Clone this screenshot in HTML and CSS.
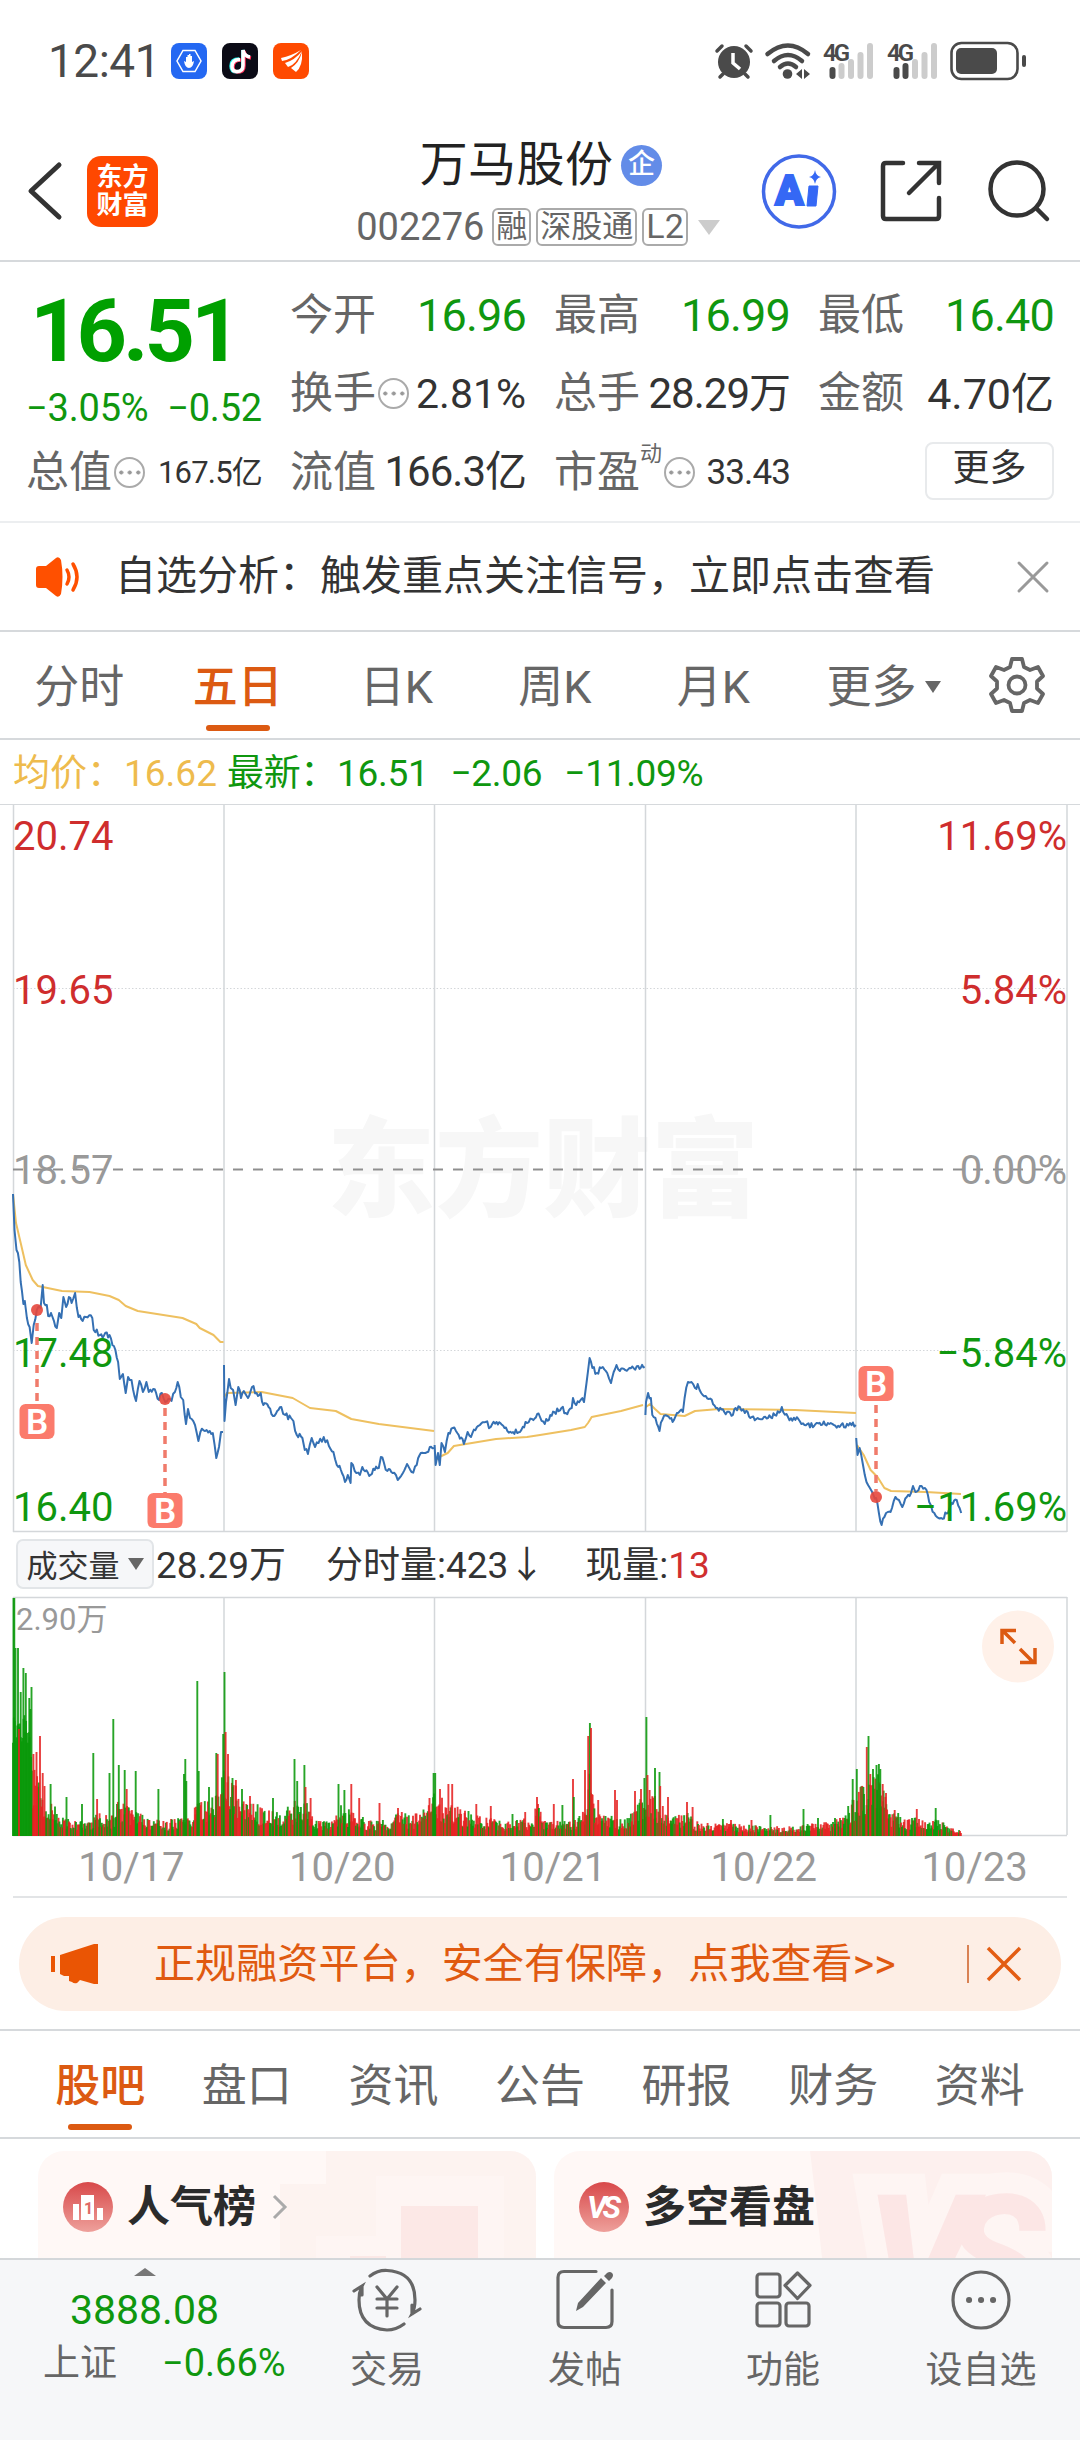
FILE: index.html
```html
<!DOCTYPE html>
<html lang="zh-CN">

<head>
    <meta charset="UTF-8">
    <meta name="viewport" content="width=device-width, initial-scale=1.0">
    <title>万马股份 002276</title>
    <link rel="stylesheet" href="styles.css">
</head>

<body>
    <!-- Status bar -->
    <div class="status-bar">
        <div class="status-left">
            <span class="clock">12:41</span>
            <svg class="app-icon" width="36" height="36" viewBox="0 0 36 36">
                <rect width="36" height="36" rx="8" fill="#2468f2" />
                <path d="M12 7.500h12l6 10.500-6 10.500H12L6 18z" fill="none" stroke="#fff" stroke-width="1.500" />
                <path d="M13 18l2 1v-5h1.500v-2H18v-1h1.500v2H21v6l2-1q-1 7-5 7t-5-7z" fill="#fff" />
            </svg>
            <svg class="app-icon" width="36" height="36" viewBox="0 0 36 36">
                <rect width="36" height="36" rx="8" fill="#0b0b16" />
                <path d="M17 16q-8 0-8 7 0 6 6 6 6 0 6-6V7q1 6 7 7" fill="none" stroke="#25f4ee" stroke-width="3.500" />
                <path d="M19 17q-8 0-8 7 0 5 5 5 6 0 6-6V8q1 6 7 7" fill="none" stroke="#fe2c55" stroke-width="3.500" />
                <path d="M18 16.500q-8 0-8 7 0 5 5 5 6 0 6-6V7q1 6 7 7" fill="none" stroke="#fff" stroke-width="3.500" />
            </svg>
            <svg class="app-icon" width="36" height="36" viewBox="0 0 36 36">
                <rect width="36" height="36" rx="8" fill="#ff4a00" />
                <path d="M8 15Q18 13 28 7 18 17 9 18zM12 20q10-3 17-12-6 14-14 16zM18 25q8-5 11-16 1 14-6 20z" fill="#fff" />
            </svg>
        </div>
        <div class="status-right">
            <svg width="38" height="38" viewBox="0 0 38 38">
                <circle cx="19" cy="20" r="16" fill="#4a4a4a" />
                <path d="M18 11v10l7 6" fill="none" stroke="#fff" stroke-width="3.500" />
                <path d="M2 9l5-5M36 9l-5-5M8 32l-3 3M30 32l3 3" stroke="#4a4a4a" stroke-width="3.500" stroke-linecap="round" />
            </svg>
            <svg width="46" height="38" viewBox="0 0 46 38">
                <g fill="none" stroke="#4a4a4a" stroke-width="4.500" stroke-linecap="round">
                    <path d="M2.500 12Q23-5 43 12" />
                    <path d="M9 19Q23 7 37 19" />
                    <path d="M15 25Q23 18 31 25" />
                </g>
                <circle cx="22.500" cy="32" r="4.800" fill="#4a4a4a" />
                <path d="M31 32l6-5v10zM45 32l-6-5v10z" fill="#4a4a4a" />
            </svg>
            <svg width="54" height="38" viewBox="0 0 54 38">
                <text class="signal-text" x="0" y="19">4G</text>
                <path d="M9.500 28v6" class="bar-on" />
                <path d="M18.500 24v10M28 20v14M37.500 13v21M47 4v30" class="bar-off" />
            </svg>
            <svg width="54" height="38" viewBox="0 0 54 38">
                <text class="signal-text" x="0" y="19">4G</text>
                <path d="M9.500 28v6M18.500 24v10" class="bar-on" />
                <path d="M28 20v14M37.500 13v21M47 4v30" class="bar-off" />
            </svg>
            <svg width="77" height="40" viewBox="0 0 77 40">
                <rect x="1.500" y="2" width="66" height="36" rx="10" fill="none" stroke="#4a4a4a" stroke-width="2.600" />
                <rect x="6" y="7" width="41" height="26" rx="5" fill="#4a4a4a" />
                <path d="M74 16v8" stroke="#4a4a4a" stroke-width="4" stroke-linecap="round" />
            </svg>
        </div>
    </div>

    <!-- Stock title -->
    <header class="header">
        <div class="header-left">
            <svg width="34" height="58" viewBox="0 0 34 58">
                <path d="M31 3L3 29l28 26" fill="none" stroke="#333" stroke-width="5" stroke-linecap="round" stroke-linejoin="round" />
            </svg>
            <div class="logo"><span>东方</span><span>财富</span></div>
        </div>
        <div class="header-title">
            <div class="stock-name">万马股份<span class="badge">企</span></div>
            <div class="stock-code">002276<span class="tag">融</span><span class="tag">深股通</span><span class="tag">L2</span><i class="caret"></i></div>
        </div>
        <div class="header-right">
            <svg width="75" height="75" viewBox="0 0 75 75">
                <circle cx="37" cy="37.500" r="35.500" fill="none" stroke="#4169e8" stroke-width="3.500" />
                <text x="13" y="51" class="ai-text">A</text>
                <path d="M47 32h9l-2 20h-9z" fill="#3568f5" stroke="#3568f5" stroke-linejoin="round" />
                <path d="M53 16q1 6 6 7-5 1-6 7-1-6-6-7 5-1 6-7z" fill="#3568f5" />
            </svg>
            <svg width="62" height="62" viewBox="0 0 62 62">
                <path d="M23 3H6q-3 0-3 3v50q0 3 3 3h50q3 0 3-3V38" fill="none" stroke="#333" stroke-width="4.500" stroke-linecap="round" />
                <path d="M39 3h20v20M58 4L29 33" fill="none" stroke="#333" stroke-width="4.500" stroke-linecap="round" />
            </svg>
            <svg width="62" height="64" viewBox="0 0 62 64">
                <circle cx="29" cy="30" r="26.500" fill="none" stroke="#333" stroke-width="4.500" />
                <path d="M48 49l11 11" stroke="#333" stroke-width="4.500" stroke-linecap="round" />
            </svg>
        </div>
    </header>

    <!-- Quote figures -->
    <section class="quote">
        <div class="quote-main">
            <div class="price">16.51</div>
            <div class="change"><span>−3.05%</span><span>−0.52</span></div>
        </div>
        <div class="cell"><label>今开</label><b class="down">16.96</b></div>
        <div class="cell"><label>最高</label><b class="down">16.99</b></div>
        <div class="cell"><label>最低</label><b class="down">16.40</b></div>
        <div class="cell"><label>换手</label><i class="info"></i><b class="percent">2.81%</b></div>
        <div class="cell"><label>总手</label><b class="tight">28.29万</b></div>
        <div class="cell"><label>金额</label><b class="amount">4.70亿</b></div>
        <div class="cell"><label>总值</label><i class="info"></i><b class="small">167.5亿</b></div>
        <div class="cell"><label>流值</label><b class="tight">166.3亿</b></div>
        <div class="cell"><label>市盈<sup>动</sup></label><i class="info"></i><b class="medium">33.43</b></div>
        <div class="cell"><button class="more-button">更多</button></div>
    </section>

    <section class="notice">
        <svg width="46" height="40" viewBox="0 0 46 40">
            <path d="M1 12q0-3 3-3h7L21 1q3-2 5 2 3 17 0 34-2 4-5 2l-10-8H4q-3 0-3-3z" fill="#ff5000" />
            <path d="M32 13q4 7 0 14M38 7q8 13 0 26" fill="none" stroke="#ff5000" stroke-width="3.500" stroke-linecap="round" />
        </svg>
        <p>自选分析：触发重点关注信号，立即点击查看</p>
        <svg width="32" height="32" viewBox="0 0 32 32">
            <path d="M2 2l28 28M30 2L2 30" stroke="#999" stroke-width="3" stroke-linecap="round" />
        </svg>
    </section>

    <nav class="period-tabs">
        <a>分时</a>
        <a class="active">五日</a>
        <a>日K</a>
        <a>周K</a>
        <a>月K</a>
        <a class="more">更多<i class="triangle"></i></a>
        <svg width="56" height="56" viewBox="0 0 56 56">
            <path d="M23 2h10l2 8 6 3 8-3 5 9-6 5.500v7l6 5.500-5 9-8-3-6 3-2 8H23l-2-8-6-3-8 3-5-9 6-5.500v-7L2 19l5-9 8 3 6-3z" fill="none" stroke="#666" stroke-width="3.800" stroke-linejoin="round" />
            <circle cx="28" cy="28" r="8.500" fill="none" stroke="#666" stroke-width="3.800" />
        </svg>
    </nav>

    <div class="legend">
        <span class="average">均价：16.62</span>
        <span class="latest">最新：16.51</span>
        <span class="latest">−2.06</span>
        <span class="latest">−11.09%</span>
    </div>

    <!-- Five day price chart -->
    <svg class="price-chart" width="1080" height="727" viewBox="0 0 1080 727">
        <text class="watermark" x="543" y="403">东方财富</text>
        <g class="grid">
            <path d="M13.500 0v727M224 0v727M434.500 0v727M645.500 0v727M856 0v727M1067 0v727" />
            <path d="M13 726.500h1054" />
            <path class="dotted" d="M13 183.500h1054M13 545.500h1054" />
        </g>
        <path class="middle" d="M13 364.500h1054" />
        <g id="averageLines" class="average-line"></g>
        <g id="priceLines" class="price-line"></g>
        <g class="axis">
            <text x="13" y="45" class="up">20.74</text>
            <text x="13" y="199" class="up">19.65</text>
            <text x="13" y="379" class="flat">18.57</text>
            <text x="13" y="562" class="down">17.48</text>
            <text x="13" y="716" class="down">16.40</text>
            <text x="1067" y="45" class="up end">11.69%</text>
            <text x="1067" y="199" class="up end">5.84%</text>
            <text x="1067" y="379" class="flat end">0.00%</text>
            <text x="1067" y="562" class="down end">−5.84%</text>
            <text x="1067" y="716" class="down end">−11.69%</text>
        </g>
        <g class="buy-marks">
            <path d="M37 518v81M165 603v85M876 600v86" />
            <circle cx="37" cy="505" r="6" />
            <circle cx="165" cy="594" r="6" />
            <circle cx="876" cy="692" r="6" />
            <rect x="19.500" y="599" width="35" height="35" rx="6" />
            <rect x="147.500" y="688" width="35" height="35" rx="6" />
            <rect x="858.500" y="561" width="35" height="35" rx="6" />
            <text x="37" y="629">B</text>
            <text x="165" y="718">B</text>
            <text x="876" y="591">B</text>
        </g>
    </svg>

    <div class="volume-info">
        <button class="volume-button">成交量<i class="triangle"></i></button>
        <span>28.29万</span>
        <span>分时量:423↓</span>
        <span>现量:<em>13</em></span>
    </div>

    <!-- Volume chart -->
    <svg class="volume-chart" width="1080" height="240" viewBox="0 0 1080 240">
        <g class="grid">
            <path d="M13 .500h1054M13 238.500h1054" />
            <path d="M13.500 0v238M224 0v238M434.500 0v238M645.500 0v238M856 0v238M1067 0v238" />
        </g>
        <text x="16" y="33" class="volume-max">2.90万</text>
        <g id="volumeBars" class="volume-bars"></g>
        <circle cx="1018" cy="49.500" r="36" fill="#fff1e9" />
        <path d="M1002 47V33.500h14M1003 34l12 12M1020 52l14 14M1035 51v14.500h-15" class="expand" />
    </svg>
    <div class="dates">
        <span>10/17</span>
        <span>10/20</span>
        <span>10/21</span>
        <span>10/22</span>
        <span>10/23</span>
    </div>

    <section class="promo">
        <svg width="50" height="42" viewBox="0 0 50 42">
            <path d="M10 12L44 1h4v40h-4l-14-4-3 3q-3 1-5-1l-3-1v-5h-5l-4-2zM1 13h4v16H1z" fill="#ea5504" />
        </svg>
        <p>正规融资平台，安全有保障，点我查看&gt;&gt;</p>
        <i class="divider"></i>
        <svg width="36" height="36" viewBox="0 0 36 36">
            <path d="M2 2l32 32M34 2L2 34" stroke="#e35d13" stroke-width="3.500" />
        </svg>
    </section>

    <nav class="content-tabs">
        <a class="active">股吧</a>
        <a>盘口</a>
        <a>资讯</a>
        <a>公告</a>
        <a>研报</a>
        <a>财务</a>
        <a>资料</a>
    </nav>

    <section class="cards">
        <div class="card">
            <svg class="card-art" width="210" height="107" viewBox="0 0 210 107">
                <path d="M0 0h210v107H-46V33H0z" fill="#fdf1ef" opacity=".8" />
                <path d="M-10 107V85h60V25h128v82z" fill="#fef5f3" />
                <path d="M75 107V55h77v52z" fill="#fce8e6" />
                <path d="M24 105h36v2H24z" fill="#fce8e6" />
            </svg>
            <svg width="50" height="50" viewBox="0 0 50 50">
                <circle cx="25" cy="25" r="25" fill="url(#redFade)" />
                <path d="M10 22h6v16h-6zM18 13h13v25H18zM34 26h6v12h-6z" fill="#fff" />
                <text x="21" y="32" class="rank-text">1</text>
            </svg>
            <h3>人气榜</h3>
            <svg width="16" height="26" viewBox="0 0 16 26">
                <path d="M2 2l11 11L2 24" fill="none" stroke="#aaa" stroke-width="3" />
            </svg>
        </div>
        <div class="card">
            <svg class="card-art" width="242" height="107" viewBox="0 0 242 107">
                <path d="M0 0h242v107H12Q6 50 0 0z" fill="#fdf0ee" />
                <text x="56" y="165" class="vs-art">VS</text>
            </svg>
            <svg width="50" height="50" viewBox="0 0 50 50">
                <defs>
                    <linearGradient id="redFade" x2="0" y2="1">
                        <stop offset="0" stop-color="#d8494a" />
                        <stop offset="1" stop-color="#eea09b" />
                    </linearGradient>
                </defs>
                <circle cx="25" cy="25" r="25" fill="url(#redFade)" />
                <text x="23" y="36" class="vs-text">VS</text>
            </svg>
            <h3>多空看盘</h3>
        </div>
    </section>

    <footer class="bottom-bar">
        <div class="index">
            <i class="up-triangle"></i>
            <strong>3888.08</strong>
            <div><span>上证</span><b>−0.66%</b></div>
        </div>
        <a>
            <svg width="68" height="64" viewBox="0 0 68 64">
                <g fill="none" stroke="#666" stroke-width="3.200" stroke-linecap="round">
                    <path d="M17 8Q25 2 34 2.500 62 4 62 32q0 8-3 14l8-5M59 46V37" />
                    <path d="M51 56q-8 6-17 6Q6 60 6 32q0-8 3-14l-8 5M9 18v9" />
                    <path d="M24 19l10 12 10-12M34 31v17M24 31h20M24 40h20" />
                </g>
            </svg>
            交易
        </a>
        <a>
            <svg width="60" height="64" viewBox="0 0 60 64">
                <path d="M41 3.500H9q-6 0-6 6v44q0 6 6 6h42q6 0 6-6V22" fill="none" stroke="#666" stroke-width="3.200" stroke-linecap="round" />
                <path d="M46 10l5 5-23 24-7 4 2-8zM49 8l3-3q3-2 5 0t0 5l-3 3z" fill="#666" />
            </svg>
            发帖
        </a>
        <a>
            <svg width="60" height="64" viewBox="0 0 60 64">
                <g fill="none" stroke="#666" stroke-width="3.200">
                    <rect x="4" y="6" width="23" height="23" rx="3" />
                    <rect x="4" y="35" width="23" height="23" rx="3" />
                    <rect x="33" y="35" width="23" height="23" rx="3" />
                    <path d="M44.500 5L57 17.500 44.500 30.500 32 17.500z" stroke-linejoin="round" />
                </g>
            </svg>
            功能
        </a>
        <a>
            <svg width="60" height="64" viewBox="0 0 60 64">
                <circle cx="30" cy="32" r="28" fill="none" stroke="#666" stroke-width="3.200" />
                <path d="M18 32h.100M30 32h.100M42 32h.100" stroke="#666" stroke-width="6" stroke-linecap="round" />
            </svg>
            设自选
        </a>
    </footer>

    <script src="script.js"></script>
</body>

</html>
```

FILE: styles.css
```css
* {
    box-sizing: border-box;
}

body {
    margin: 0;
    width: 1080px;
    height: 2440px;
    overflow: hidden;
    background-color: #fff;
    color: #333;
    font-family: Roboto, 'Noto Sans CJK SC', sans-serif;
    font-size: 40px;
    line-height: 1;
}

svg {
    display: block;
    flex-shrink: 0;
    overflow: visible;
}

p,
h3 {
    margin: 0;
}

i,
em {
    font-style: normal;
}

b {
    font-weight: 400;
}

button {
    font-family: inherit;
    padding: 0;
    color: #333;
}

.up {
    fill: #cf2d2d;
}

.down {
    color: #0f970f;
    fill: #0f970f;
}

.flat {
    fill: #999;
}

/* Status bar */
.status-bar {
    display: flex;
    justify-content: space-between;
    height: 122px;
    padding: 0 53px 0 48px;
    align-items: center;
}

.status-left,
.status-right {
    display: flex;
    align-items: center;
}

.clock {
    font-size: 46px;
    letter-spacing: -.5px;
    color: #4a4a4a;
    width: 123px;
}

.app-icon {
    margin-right: 15px;
}

.status-right {
    gap: 10px;
}

.status-right svg:nth-child(2) {
    margin: 0 2px 0 2px;
}

.status-right svg:nth-child(5) {
    margin-left: -1px;
}

.signal-text {
    font-size: 24px;
    font-weight: 600;
    letter-spacing: -3px;
    fill: #4a4a4a;
}

.bar-on,
.bar-off {
    stroke: #4a4a4a;
    stroke-width: 6;
    stroke-linecap: round;
}

.bar-off {
    stroke: #ccc;
}

/* Header */
.header {
    display: grid;
    grid-template-columns: 318px 1fr 318px;
    align-items: center;
    height: 140px;
    border-bottom: 2px solid #d6d9dc;
}

.header-left {
    display: flex;
    align-items: center;
    gap: 25px;
    padding-left: 28px;
}

.logo {
    display: flex;
    flex-direction: column;
    justify-content: center;
    align-items: center;
    gap: 2px;
    width: 71px;
    height: 71px;
    border-radius: 14px;
    background-color: #ff4800;
    color: #fff;
    font-size: 26px;
    font-weight: 700;
}

.header-title {
    padding-top: 10px;
}

.stock-name {
    display: flex;
    align-items: center;
    justify-content: center;
    gap: 8px;
    height: 62px;
    padding-left: 2px;
    font-size: 48px;
    letter-spacing: .4px;
    color: #222;
}

.badge {
    width: 41px;
    height: 41px;
    border-radius: 50%;
    background-color: #638ce8;
    color: #fff;
    font-size: 27px;
    font-weight: 500;
    line-height: 39px;
    text-align: center;
}

.stock-code {
    display: flex;
    align-items: center;
    justify-content: center;
    height: 62px;
    padding-right: 4px;
    font-size: 38px;
    color: #666;
}

.tag {
    margin-left: 5px;
    padding: 0 2px;
    height: 38px;
    line-height: 33px;
    font-size: 31px;
    border: 2px solid #aaa;
    border-radius: 6px;
}

.tag:nth-child(1) {
    margin-left: 8px;
}

.tag:nth-child(3) {
    font-size: 34px;
}

.caret {
    margin-left: 10px;
    border: 11px solid transparent;
    border-top: 15px solid #ccc;
    border-bottom: 0;
}

.header-right {
    display: flex;
    align-items: center;
    gap: 43px;
}

.header-right svg:last-child {
    margin-left: 3px;
}

.ai-text {
    font-size: 42px;
    font-weight: 900;
    fill: #3568f5;
    stroke: #3568f5;
    stroke-width: 2;
}

/* Quote */
.quote {
    display: grid;
    grid-template-columns: repeat(4, 1fr);
    grid-template-rows: repeat(3, 78.500px);
    column-gap: 28px;
    height: 261px;
    padding: 14px 26px 0 26px;
    border-bottom: 2px solid #eceef0;
}

.quote-main {
    grid-row: span 2;
    color: #0f970f;
}

.price {
    padding: 2px 0 0 4px;
    height: 108px;
    line-height: 106px;
    font-size: 88px;
    font-weight: 700;
    letter-spacing: -4px;
    color: #00a000;
}

.change {
    display: flex;
    justify-content: space-between;
    font-size: 38px;
    line-height: 48px;
    letter-spacing: -.2px;
}

.cell {
    display: flex;
    align-items: center;
    white-space: nowrap;
}

.cell label {
    font-size: 43px;
    color: #666;
}

.cell b {
    margin-left: auto;
    padding-top: 1px;
    font-size: 42px;
}

.cell b.down {
    font-size: 45px;
    letter-spacing: -.8px;
}

.cell b.percent {
    font-size: 41px;
}

.cell b.amount {
    font-size: 43px;
}

.cell b.tight {
    letter-spacing: -1px;
}

.cell b.small {
    font-size: 31px;
    letter-spacing: -.8px;
}

.cell b.medium {
    font-size: 35px;
    letter-spacing: -.9px;
}

.cell:nth-child(n+8) b {
    padding-top: 0;
}

.cell sup {
    font-size: 22px;
    line-height: 0;
    vertical-align: 26px;
}

.info {
    width: 31px;
    height: 31px;
    margin-left: 2px;
    border: 2px solid #aaa;
    border-radius: 50%;
    background: radial-gradient(circle, #999 1.800px, transparent 2.300px) 1px 0 / 8.500px 27px;
}

.more-button {
    margin: -3px 0 0 auto;
    width: 129px;
    height: 58px;
    border: 2px solid #e8eaec;
    border-radius: 8px;
    background-color: #fff;
    font-size: 37px;
    line-height: 48px;
    padding-bottom: 3px;
}

/* Notice */
.notice {
    display: flex;
    align-items: center;
    height: 109px;
    padding: 0 31px 0 35px;
    border-bottom: 2px solid #d6d9dc;
}

.notice p {
    flex: 1;
    padding-left: 34px;
    font-size: 41px;
}

/* Tabs */
.period-tabs {
    display: flex;
    align-items: center;
    height: 108px;
    border-bottom: 2px solid #d6d9dc;
}

.period-tabs a,
.content-tabs a {
    position: relative;
    display: flex;
    align-items: center;
    justify-content: center;
    height: 100%;
    padding-top: 4px;
    font-size: 45px;
    color: #666;
}

.period-tabs a {
    width: 158.500px;
}

.period-tabs .more {
    width: 182px;
    margin-right: 14px;
}

.period-tabs .active,
.content-tabs .active {
    color: #dc5a12;
    font-weight: 500;
}

.period-tabs .active::after,
.content-tabs .active::after {
    content: '';
    position: absolute;
    bottom: 7px;
    left: calc(50% - 32px);
    width: 64px;
    height: 6px;
    border-radius: 3px;
    background-color: #dc5a12;
}

.triangle {
    margin-left: 8px;
    border: 8px solid transparent;
    border-top: 12px solid #666;
    border-bottom: 0;
}

/* Charts */
.legend {
    display: flex;
    align-items: center;
    height: 65px;
    padding: 2px 0 0 13px;
    font-size: 37px;
    border-bottom: 1px solid #d6d9dc;
}

.average {
    margin-right: 10px;
    color: #eebb4d;
}

.latest {
    margin-right: 22px;
    letter-spacing: -.3px;
    color: #0f970f;
}

.grid {
    fill: none;
    stroke: #d4d7da;
    stroke-width: 1.500;
}

.grid .dotted {
    stroke-dasharray: 1.500 2;
    stroke-width: 1;
}

.middle {
    stroke: #8f8f8f;
    stroke-width: 2;
    stroke-dasharray: 10 10;
}

.watermark {
    font-size: 108px;
    font-weight: 900;
    text-anchor: middle;
    fill: #f7f7f7;
}

.average-line,
.price-line {
    fill: none;
    stroke: #eec060;
    stroke-width: 2;
    stroke-linejoin: round;
}

.price-line {
    stroke: #3570b3;
}

.axis {
    font-size: 40px;
}

.end {
    text-anchor: end;
}

.buy-marks path {
    stroke: #f07b6b;
    stroke-width: 3.500;
    stroke-dasharray: 8 6;
}

.buy-marks circle {
    fill: #e5473c;
    opacity: .9;
}

.buy-marks rect {
    fill: #fb7b6c;
}

.buy-marks text {
    font-size: 35px;
    font-weight: 600;
    text-anchor: middle;
    fill: #fff;
}

.volume-info {
    display: flex;
    align-items: center;
    height: 65px;
    padding: 1px 0 0 16px;
    font-size: 37px;
}

.volume-info span {
    margin-right: 40px;
}

.volume-info em {
    color: #d02f2f;
}

.volume-button {
    display: flex;
    align-items: center;
    justify-content: center;
    width: 138px;
    height: 50px;
    margin: -3px 2px 0 0;
    border: 2px solid #e2e5e8;
    border-radius: 7px;
    background-color: #f6f7f9;
    font-size: 31px;
}

.volume-max {
    font-size: 31px;
    fill: #999;
}

.volume-bars line {
    stroke: #0a990a;
    stroke-width: 1.900;
    opacity: .88;
}

.volume-bars line.rise {
    stroke: #e62222;
}

.expand {
    fill: none;
    stroke: #dc5a12;
    stroke-width: 3.500;
}

.dates {
    display: grid;
    grid-template-columns: repeat(5, 1fr);
    height: 63px;
    margin: -2px 13px 0;
    padding-top: 13px;
    font-size: 40px;
    color: #999;
    border-bottom: 2px solid #e2e4e6;
    text-align: center;
    text-indent: 26px;
}

/* Promo */
.promo {
    display: flex;
    align-items: center;
    height: 94px;
    margin: 19px 19px 18px;
    padding: 0 39px 0 31px;
    border-radius: 47px;
    background-color: #fdeee5;
    color: #e05a10;
}

.promo p {
    flex: 1;
    padding-left: 54px;
    font-size: 41px;
    letter-spacing: .1px;
}

.divider {
    width: 2px;
    height: 38px;
    margin-right: 17px;
    background-color: #d98254;
}

.content-tabs {
    display: grid;
    grid-template-columns: repeat(7, 1fr);
    height: 110px;
    padding: 0 27px;
    border-top: 2px solid #d6d9dc;
    border-bottom: 2px solid #d6d9dc;
}

/* Cards */
.cards {
    display: grid;
    grid-template-columns: 1fr 1fr;
    gap: 18px;
    height: 119px;
    padding: 12px 28px 0 38px;
}

.card {
    position: relative;
    display: flex;
    align-items: center;
    padding: 5px 0 0 25px;
    border-radius: 26px 26px 0 0;
    background-color: #fff8f6;
    overflow: hidden;
}

.card > svg,
.card h3 {
    z-index: 1;
}

.card .card-art {
    position: absolute;
    top: 0;
    right: 0;
    z-index: 0;
}

.card h3 {
    margin: 0 16px 0 14px;
    font-size: 43px;
    font-weight: 700;
    color: #2b2b2b;
}

.rank-text {
    font-size: 16px;
    font-weight: 700;
    fill: #e06a66;
}

.vs-text {
    font-size: 31px;
    font-weight: 700;
    font-style: italic;
    letter-spacing: -4px;
    text-anchor: middle;
    fill: #fff;
}

.vs-art {
    font-size: 170px;
    font-weight: 800;
    font-style: italic;
    letter-spacing: -32px;
    fill: #fce6e5;
    stroke: #fef5f3;
    stroke-width: 42;
    paint-order: stroke;
}

/* Bottom bar */
.bottom-bar {
    display: grid;
    grid-template-columns: 287px repeat(4, 198px);
    height: 183px;
    border-top: 2px solid #d4d7da;
    background-color: #f6f7f9;
}

.bottom-bar a {
    display: flex;
    flex-direction: column;
    align-items: center;
    padding: 8px 0 0 2px;
    gap: 20px;
    font-size: 37px;
    color: #666;
}

.index {
    display: flex;
    flex-direction: column;
    align-items: center;
    padding: 8px 0 0 2px;
    white-space: nowrap;
}

.up-triangle {
    border: 11px solid transparent;
    border-bottom: 8px solid #777;
    border-top: 0;
}

.index strong {
    margin: 14px 0 13px;
    font-size: 41px;
    font-weight: 400;
    color: #0f970f;
}

.index div {
    display: flex;
    align-items: center;
    gap: 45px;
    padding-left: 41px;
    align-self: flex-start;
    color: #666;
    font-size: 37px;
}

.index div b {
    font-size: 38px;
    color: #0f970f;
}
```

FILE: script.js
```js
// Price points for each trading day: x, y pairs in chart pixels
const priceDays = [
    "13,389 14.5,425 16.5,445 19.3,457 20.7,477 23.4,499 24.8,496 26.9,513 29.6,522 31.7,538 33.7,520 36.8,505 40.6,503 42.7,480 44,498 46.8,500 48.2,511 51,508 56.8,523 59.2,508 61.3,513 63.4,492 66.1,502 68.9,492 71.6,498 75.1,488 78.5,512 82.6,516 86.1,512 92.3,513 93.7,525 99.9,530 109.5,530 115.4,545 118.1,557 119.8,574 122.9,569 125.7,588 128.1,572 131.5,575 136,596 139.5,576 142.9,587 146.4,577 148.8,587 153.2,584 159.1,595 161.9,588 165.3,597 171.5,596 174.9,587 177.7,577 180.8,592 183.2,595 186,619 188,604 190,613 195,620 198.4,636 200.4,627 206.6,625 212.8,628 216.3,653 219,642 221,627 223,627",
    "224,560 224.5,616 226,597 227.3,588 229,574 230.7,583 233.1,585 235.6,600 238.3,582 241,593 243.8,586 248,593 252,582 256.6,588 260.7,588 263.4,600 268.6,602 273,611 277.2,606 281.3,602 285.1,610 291,613 293.4,616 296.8,630 302.4,633 304.8,645 307.9,649 311.7,633 315.1,642 318.5,638 323.7,632 328.9,641 333.4,647 336.8,660 340.9,665 345,677 347.8,670 350.6,678 351.3,658 354.7,666 359.9,670 362.3,662 369.2,671 374.7,665 378.8,663 380.9,652 384,658 387.4,666 392.6,668 397.7,675 402.9,668 407,659 411.5,667 416.7,660 420.8,648 425.3,648 429.8,642 433.9,643",
    "434.6,640 435.6,660 438,648 439.8,660 441.5,638 444.9,647 448.4,628 452.8,623 457.3,628 463.9,639 467.6,627 471,632 476.9,622 485.5,617 490.7,622 496.6,617 504.5,623 513,627 520,627 526.9,618 532,614 537.2,609 540,612 544.8,619 550.3,610 561.4,603 565.8,608 571.7,603 573,593 576.2,600 580.6,595 584,597 586.5,578 589.6,553 592.4,563 596.8,568 601.3,563 607.2,568 611,578 613.7,567 616.5,560 619.9,566 629.5,563 638.2,561 644.7,562",
    "645.4,610 646,597 648.1,588 650.9,593 652.3,610 655.4,613 659.5,626 662.3,615 667.4,611 672.6,617 677,608 682.9,607 684.6,593 688,577 691.5,577 695,583 697.7,579 701.2,588 708.8,594 717.4,603 724.3,607 732.9,610 735.6,603 739.8,602 744.9,608 751.8,612 757.7,613 763.9,612 774.9,610 781.8,602 788,612 798.3,614 804.5,620 815.5,619 829.3,619 839.6,622 850,618 855.8,620",
    "856.2,633 857.5,650 859.6,643 863,660 866.5,677 869.9,683 873.4,690 876.1,693 878.9,708 881.6,720 884.4,712 887.8,707 892,703 895.4,692 898.9,695 902.3,702 906.8,692 911,688 913,681 915.4,687 919.9,681 925,683 929.2,697 934.3,708 941.2,713 948,708 951.5,698 956.7,695 961.2,708"
];

const averageDays = [
    "13,389 16,418 20.7,438 25.8,460 32.7,475 37.9,481 62,486 89.5,487 109.5,491 118.8,495 125.7,501 137.8,506 182.5,513 196.3,519 199.7,523 213.5,530 220.4,537 223.5,537",
    "224,592 227,588 261.7,587 292.7,593 310,603 335.8,606 351.3,614 378.8,619 434,626",
    "436,655 441.5,651 447.7,648 453.9,641 496,634 527,632 540,630 571,625 584.8,622 588,618 591.7,612 621,606 643,600",
    "646,602 650,599 655,604 660.5,609 684.6,611 695,606 719,604 795,605 856,608",
    "857,640 863.7,650 870.6,665 877.5,672 884.4,683 891,686 925.7,687 961,689"
];

// Usual bar height along the chart: [x, height]
const volumeBase = [
    [13, 100], [27, 105], [31, 75], [38, 60], [46, 36], [55, 27], [69, 15], [90, 13], [100, 24], [110, 18],
    [120, 35], [131, 27], [145, 18], [165, 15], [186, 18], [196, 29], [207, 34], [214, 48], [224, 62], [234, 48],
    [248, 32], [262, 28], [279, 21], [293, 31], [306, 38], [317, 15], [331, 14], [341, 29], [355, 21], [368, 15],
    [389, 15], [400, 23], [413, 19], [427, 28], [435, 43], [448, 34], [465, 24], [482, 18], [510, 13], [530, 18],
    [538, 31], [547, 13], [568, 15], [585, 24], [590, 62], [595, 26], [609, 19], [623, 16], [636, 32], [647, 48],
    [661, 34], [671, 22], [685, 23], [698, 13], [729, 12], [764, 9], [798, 10], [833, 14], [843, 18], [857, 40],
    [871, 62], [881, 55], [888, 24], [905, 15], [919, 18], [939, 15], [953, 8], [961, 5]
];

// Single tall bars: [x, height, 1 when the price rose]
const volumeSpikes = [
    [13.5, 238], [14.3, 238], [15.5, 188], [18, 188], [20.7, 144], [23.4, 168], [25.8, 163], [19, 107, 1], [29.3, 138],
    [31.5, 149], [30.3, 127], [33.4, 82, 1], [36.5, 84, 1], [40, 100, 1], [42.7, 63, 1], [44.5, 50, 1], [50.6, 52],
    [66.5, 39], [82, 32], [93.3, 83], [97.1, 37, 1], [109.5, 63], [113.3, 117], [118.8, 71], [124.7, 66], [126.7, 47, 1],
    [135.7, 65], [158.4, 47], [184, 62], [185.3, 77], [186.3, 55], [197.3, 155], [198.7, 65], [209, 49], [216.3, 83],
    [217.7, 82, 1], [223.2, 102], [224.5, 164], [225.6, 104, 1], [228, 82, 1], [232.5, 58], [235.9, 56, 1], [242, 47],
    [250, 40, 1], [273, 38], [294.5, 77], [297.2, 55], [304.4, 71], [305.5, 49, 1], [310.6, 38, 1], [338.5, 52],
    [344.4, 46], [351.3, 52, 1], [359.2, 38, 1], [379.5, 33, 1], [398, 28, 1], [429.5, 38, 1], [433.6, 63], [435.2, 63],
    [440, 47, 1], [448.4, 52, 1], [452.2, 52, 1], [476.3, 32, 1], [490.8, 30, 1], [512.5, 22], [525.2, 24, 1],
    [537, 39, 1], [553.8, 32, 1], [562.4, 31], [573, 57, 1], [573.8, 39], [585, 66, 1], [588.2, 100, 1], [589.9, 113],
    [591, 108, 1], [598.2, 36, 1], [615, 46, 1], [617, 36, 1], [635, 45, 1], [641, 47, 1], [644.4, 58], [646.4, 119],
    [647.5, 61, 1], [655, 68], [659.5, 64], [660.2, 50, 1], [668, 39, 1], [687, 34, 1], [692.6, 29, 1], [722.9, 17],
    [731, 16, 1], [751.5, 16, 1], [770.4, 21], [803.5, 27], [818, 18], [835, 18], [848.2, 30], [852.7, 57], [856.8, 67],
    [863.4, 49], [866.8, 89, 1], [868.5, 100], [870.3, 62, 1], [873, 67], [876.5, 71], [878.9, 72], [880.3, 67],
    [882.7, 52, 1], [886, 43, 1], [894.7, 26, 1], [898.2, 23], [916.8, 27, 1], [935.7, 28]
];

// Fixed seed so the chart is drawn the same way every time
let seed = 17;
function random() {
    seed = (seed * 16807) % 2147483647;
    return seed / 2147483647;
}

function addShape(parentId, name, attributes) {
    const shape = document.createElementNS("http://www.w3.org/2000/svg", name);
    Object.keys(attributes).forEach(key => shape.setAttribute(key, attributes[key]));
    document.getElementById(parentId).appendChild(shape);
}

// Adds minute ticks between the main points of a day
function addTicks(day) {
    const points = day.split(" ").map(point => point.split(",").map(Number));
    const result = [points[0]];
    for (let i = 1; i < points.length; i++) {
        const [x1, y1] = points[i - 1];
        const [x2, y2] = points[i];
        const steps = Math.floor((x2 - x1) / 1.3);
        for (let s = 1; s < steps; s++) {
            const part = s / steps;
            result.push([x1 + (x2 - x1) * part, y1 + (y2 - y1) * part + (random() - 0.5) * 6]);
        }
        result.push([x2, y2]);
    }
    return result.map(point => point[0].toFixed(1) + "," + point[1].toFixed(1)).join(" ");
}

function drawBar(x, height, rise) {
    addShape("volumeBars", "line", { x1: x, x2: x, y1: 239, y2: 239 - height, class: rise ? "rise" : "fall" });
}

function drawVolume() {
    for (let i = 1; i < volumeBase.length; i++) {
        const [x1, h1] = volumeBase[i - 1];
        const [x2, h2] = volumeBase[i];
        for (let x = x1; x < x2; x += 0.875) {
            const usual = h1 + (h2 - h1) * (x - x1) / (x2 - x1);
            const height = x < 30 ? usual * (0.9 + random() * 0.3) : usual * (0.35 + random() * 0.75);
            drawBar(x.toFixed(1), height.toFixed(1), x > 30 && random() > 0.45);
        }
    }
    volumeSpikes.forEach(spike => drawBar(spike[0], spike[1], spike[2]));
}

averageDays.forEach(day => addShape("averageLines", "polyline", { points: day }));
priceDays.forEach(day => addShape("priceLines", "polyline", { points: addTicks(day) }));
drawVolume();
```
